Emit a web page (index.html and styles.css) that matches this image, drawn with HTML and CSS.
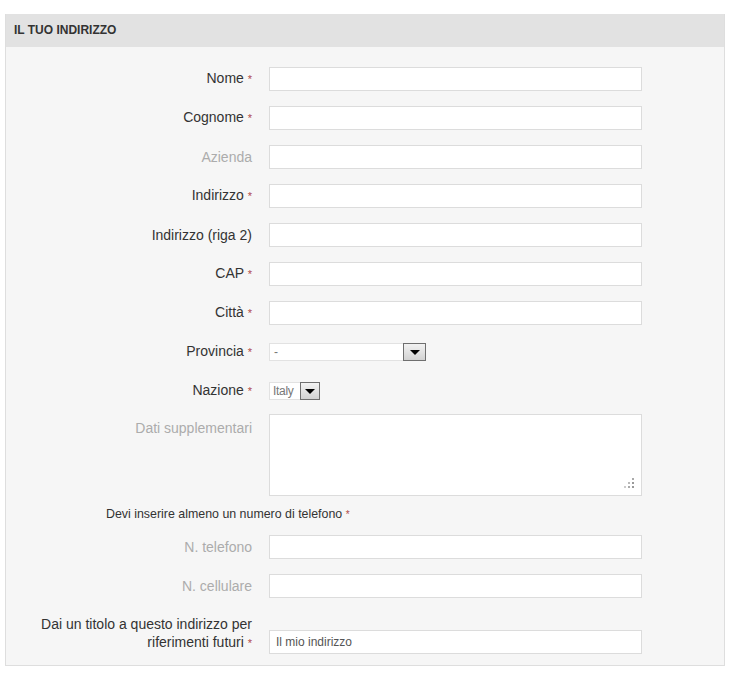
FILE: index.html
```html
<!DOCTYPE html>
<html lang="it">
<head>
<meta charset="utf-8">
<title>Il tuo indirizzo</title>
<link rel="stylesheet" href="styles.css">
</head>
<body>
<div class="panel">
  <div class="panel-head">IL TUO INDIRIZZO</div>
  <div class="panel-body">
    <div class="row"><label class="lbl">Nome <span class="req">*</span></label><input class="txt" type="text"></div>
    <div class="row"><label class="lbl">Cognome <span class="req">*</span></label><input class="txt" type="text"></div>
    <div class="row"><label class="lbl muted">Azienda</label><input class="txt" type="text"></div>
    <div class="row"><label class="lbl">Indirizzo <span class="req">*</span></label><input class="txt" type="text"></div>
    <div class="row"><label class="lbl">Indirizzo (riga 2)</label><input class="txt" type="text"></div>
    <div class="row"><label class="lbl">CAP <span class="req">*</span></label><input class="txt" type="text"></div>
    <div class="row"><label class="lbl">Città <span class="req">*</span></label><input class="txt" type="text"></div>
    <div class="row"><label class="lbl">Provincia <span class="req">*</span></label>
      <div class="sel sel-prov"><span class="sel-val">-</span><span class="sel-btn"><span class="tri"></span></span></div>
    </div>
    <div class="row"><label class="lbl">Nazione <span class="req">*</span></label>
      <div class="sel sel-naz"><span class="sel-val">Italy</span><span class="sel-btn"><span class="tri"></span></span></div>
    </div>
    <div class="row row-area"><label class="lbl muted lbl-area">Dati supplementari</label>
      <div class="area-wrap">
        <textarea class="area"></textarea>
        <svg class="grip" width="12" height="12" viewBox="0 0 12 12">
          <rect x="9" y="1" width="2" height="2" fill="#aaa"/>
          <rect x="5" y="5" width="2" height="2" fill="#bbb"/>
          <rect x="9" y="5" width="2" height="2" fill="#999"/>
          <rect x="1" y="9" width="2" height="2" fill="#ccc"/>
          <rect x="5" y="9" width="2" height="2" fill="#aaa"/>
          <rect x="9" y="9" width="2" height="2" fill="#999"/>
        </svg>
      </div>
    </div>
    <p class="note">Devi inserire almeno un numero di telefono <span class="req">*</span></p>
    <div class="row row-tel"><label class="lbl muted">N. telefono</label><input class="txt" type="text"></div>
    <div class="row"><label class="lbl muted">N. cellulare</label><input class="txt" type="text"></div>
    <div class="row row-alias"><label class="lbl lbl-two">Dai un titolo a questo indirizzo per<br>riferimenti futuri <span class="req">*</span></label><input class="txt txt-val" type="text" value="Il mio indirizzo"></div>
  </div>
</div>
</body>
</html>
```
FILE: styles.css
```css
html, body {
  margin: 0;
  padding: 0;
  background: #ffffff;
}
body {
  font-family: "Liberation Sans", Arial, sans-serif;
  color: #333333;
  padding-top: 14px;
  padding-left: 5px;
}
.panel {
  width: 720px;
  box-sizing: border-box;
  border: 1px solid #dedede;
  background: #f6f6f6;
}
.panel-head {
  height: 33px;
  background: #e2e2e2;
  font-size: 12px;
  font-weight: bold;
  line-height: 33px;
  padding-left: 8px;
  color: #333333;
  margin-top: -1px;
}
.panel-body {
  padding: 20px 0 11px 0;
}
.row {
  display: flex;
  align-items: center;
  min-height: 24px;
  margin-top: 15px;
}
.row:first-child {
  margin-top: 0;
}
.lbl {
  width: 246px;
  flex: none;
  box-sizing: border-box;
  text-align: right;
  font-size: 14px;
  line-height: 18px;
  color: #333333;
  margin-right: 17px;
  padding-bottom: 1px;
}
.lbl.muted {
  color: #acacac;
}
.req {
  font-size: 11px;
  color: #b04a4a;
}
.txt {
  width: 373px;
  height: 24px;
  box-sizing: border-box;
  border: 1px solid #dcdcdc;
  background: #ffffff;
  margin: 0;
  padding: 0 6px;
  font-family: "Liberation Sans", Arial, sans-serif;
  font-size: 12px;
  color: #555555;
  outline: none;
}
.sel {
  display: flex;
  align-items: stretch;
  height: 18px;
  box-sizing: border-box;
  background: #ffffff;
  border: 1px solid #e2e2e2;
  font-size: 12px;
  color: #777777;
}
.sel-prov {
  width: 157px;
}
.sel-naz {
  width: 51px;
}
.sel-val {
  flex: 1;
  padding-left: 4px;
  line-height: 16px;
}
.sel-naz .sel-val {
  padding-left: 3px;
  letter-spacing: -0.3px;
}
.sel-btn {
  width: 20px;
  margin: -1px -1px -1px 0;
  box-sizing: border-box;
  border: 1px solid #6f6f6f;
  background: linear-gradient(#f2f2f2, #d2d2d2);
  display: flex;
  align-items: center;
  justify-content: center;
}
.sel-prov .sel-btn {
  width: 23px;
}
.tri {
  width: 0;
  height: 0;
  border-left: 5px solid transparent;
  border-right: 5px solid transparent;
  border-top: 5px solid #000000;
}
.row-area {
  align-items: flex-start;
  margin-top: 11px;
}
.lbl-area {
  padding-top: 5px;
}
.area-wrap {
  position: relative;
  width: 373px;
  height: 82px;
}
.area {
  display: block;
  width: 373px;
  height: 82px;
  box-sizing: border-box;
  border: 1px solid #dcdcdc;
  background: #ffffff;
  margin: 0;
  resize: none;
  outline: none;
}
.grip {
  position: absolute;
  right: 7px;
  bottom: 7px;
}
.note {
  margin: 10px 0 0 0;
  padding-left: 100px;
  font-size: 12.4px;
  line-height: 16px;
  color: #333333;
}
.note .req {
  font-size: 10px;
}
.row-tel {
  margin-top: 12px;
}
.row-alias {
  align-items: flex-end;
  margin-top: 17px;
}
.lbl-two {
  padding-bottom: 2px;
}
.txt-val {
  padding-left: 6px;
}
```
